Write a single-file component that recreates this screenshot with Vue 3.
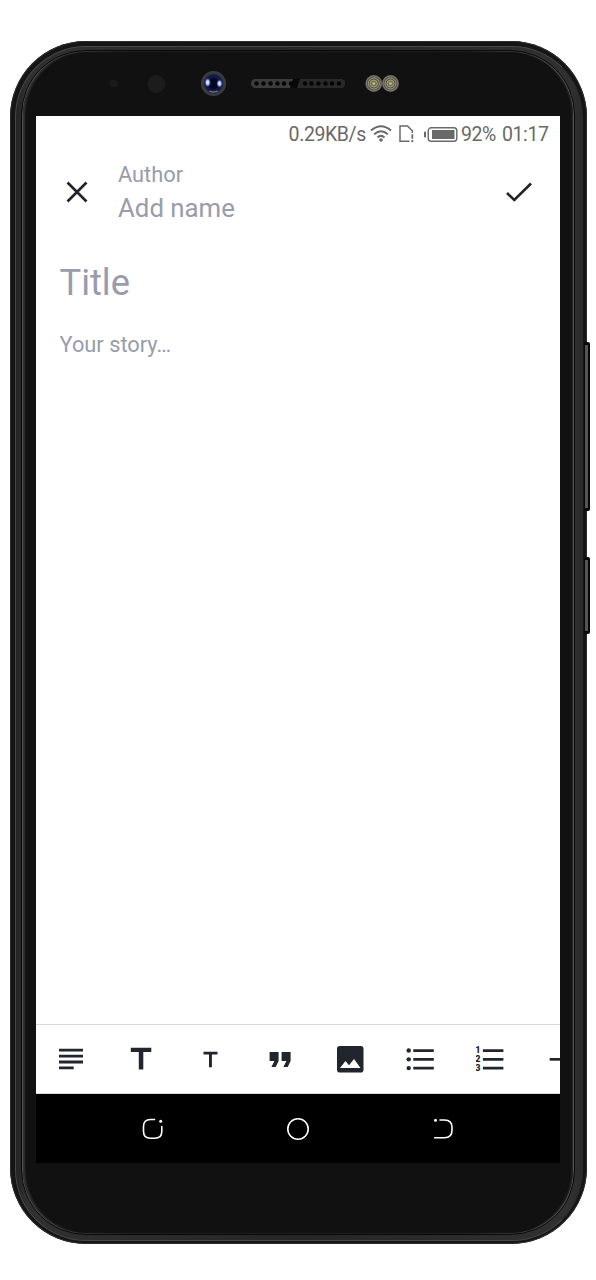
<template>
  <div class="stage">
    <div class="device">
      <div class="side-key volume"></div>
      <div class="side-key power"></div>

      <div class="rim">
        <div class="groove">
          <div class="panel">
            <div class="sensors">
              <svg width="524" height="62" viewBox="36 54 524 62">
                <defs>
                  <radialGradient id="lens">
                    <stop offset="0" stop-color="#03051c" />
                    <stop offset="0.45" stop-color="#0b1550" />
                    <stop offset="0.68" stop-color="#141a3c" />
                    <stop offset="0.78" stop-color="#33373d" />
                    <stop offset="1" stop-color="#3c4045" />
                  </radialGradient>
                  <radialGradient id="glint">
                    <stop offset="0" stop-color="#fff" />
                    <stop offset="0.45" stop-color="#a9bcff" />
                    <stop offset="1" stop-color="#1c2f9a" stop-opacity="0" />
                  </radialGradient>
                </defs>
                <circle cx="113.500" cy="83.500" r="4" fill="#191919" />
                <circle cx="156.500" cy="84" r="9" fill="#1c1c1c" />

                <!-- front camera -->
                <circle cx="213.500" cy="83.500" r="12.500" fill="url(#lens)" />
                <circle cx="213.500" cy="83.500" r="5.500" fill="#040722" />
                <ellipse cx="207.700" cy="82.500" rx="3.400" ry="5" fill="url(#glint)" />
                <ellipse cx="219.500" cy="83.500" rx="3.400" ry="4.500" fill="url(#glint)" />
                <path d="M209.500 91Q213.500 92.800 217.500 91" fill="none" stroke="#7d838d" stroke-width="1.200" />

                <!-- earpiece -->
                <rect x="251" y="79" width="94" height="9" rx="4.500" fill="#3c3c3c" />
                <path d="M293 79h47.500v9H290z" fill="#080808" />
                <path d="M300 79h40.500a4.500 4.500 0 0 1 0 9H297z" fill="#292929" />
                <circle v-for="x in speakerHoles" :key="x" :cx="x" cy="83.500" r="2.200" fill="#050505" />

                <!-- flash -->
                <g v-for="x in [373.8, 390.500]" :key="x" fill="none">
                  <circle :cx="x" cy="83.500" r="8.500" fill="#55544b" />
                  <circle :cx="x" cy="83.500" r="7.500" stroke="#8b877c" stroke-width="0.800" />
                  <circle :cx="x" cy="83.500" r="5.500" stroke="#a4a184" stroke-width="0.900" />
                  <circle :cx="x" cy="83.500" r="3.500" fill="#75734b" stroke="#aaa77a" stroke-width="0.900" />
                  <circle :cx="x" cy="83.500" r="1.300" fill="#c8c386" />
                </g>
              </svg>
            </div>

            <div class="screen">
              <div class="status-bar">
                <span class="speed">0.29KB/s</span>
                <svg class="wifi" width="22" height="18" viewBox="0 0 22 18" fill="none" stroke="#696969" stroke-width="2">
                  <path d="M1 5.500Q11-3 21 5.500M4.200 9.200Q11 3.200 17.800 9.200M7.500 12.500Q11 9.200 14.500 12.500" />
                  <circle cx="11" cy="15" r="1.800" fill="#696969" stroke="none" />
                </svg>
                <svg class="sim" width="15" height="18" viewBox="0 0 15 18" fill="none" stroke="#696969" stroke-width="1.500">
                  <path d="M10.500 16.200H1V1h7.500l4.800 4.800V8" />
                  <path d="M13.300 9.300v4.400" stroke-width="1.800" />
                  <circle cx="13.300" cy="16.200" r="1.100" fill="#696969" stroke="none" />
                </svg>
                <svg class="battery" width="34" height="15" viewBox="0 0 34 15">
                  <rect x="0" y="4.500" width="2" height="6" rx="0.800" fill="#696969" />
                  <rect x="4.200" y="0.800" width="28.600" height="13.400" rx="3" fill="none" stroke="#696969" stroke-width="1.400" />
                  <rect x="8" y="3" width="22.500" height="9" fill="#696969" />
                </svg>
                <span class="percent">92%</span>
                <span class="clock">01:17</span>
              </div>

              <header class="app-bar">
                <svg width="22" height="22" viewBox="0 0 22 22" fill="none" stroke="#20252b" stroke-width="2.600">
                  <path d="M1.500 1.500l19 19M20.500 1.500l-19 19" />
                </svg>
                <div class="author">
                  <span class="author-label">Author</span>
                  <span class="author-name">Add name</span>
                </div>
                <svg class="done" width="26" height="20" viewBox="0 0 26 20" fill="none" stroke="#20252b" stroke-width="2.600">
                  <path d="M1 11l7.300 7L25 1.500" />
                </svg>
              </header>

              <main class="editor">
                <div class="title">Title</div>
                <div class="story">Your story…</div>
              </main>

              <footer class="toolbar">
                <div v-for="tool in tools" :key="tool" class="tool">
                  <svg width="28" height="28" viewBox="0 0 28 28" fill="#20252e">
                    <path v-if="tool === 'paragraph'" d="M2 3.700h24v2.800H2zM2 9.700h24v2.800H2zM2 15.600h24v2.800H2zM2 21.500h14.700v2.800H2z" />
                    <path v-else-if="tool === 'heading'" d="M3.800 2.700h20.500v4.200h-8v17.600h-4.500V6.900h-8z" />
                    <path v-else-if="tool === 'subheading'" d="M7.500 6.700h14v2.900h-5.600v12.700H13V9.600H7.500z" />
                    <path v-else-if="tool === 'quote'" d="M3.600 7h9v9L9.700 22H5.400l3-6H3.600zM15.600 7h9v9l-2.900 6h-4.300l3-6h-4.800z" />
                    <template v-else-if="tool === 'image'">
                      <rect x="1" y="1" width="26.500" height="26.500" rx="2.800" />
                      <path d="M4 23l5.500-7 3.500 4.300L18 14l6.500 9z" fill="#fff" />
                    </template>
                    <template v-else-if="tool === 'bullets'">
                      <path d="M7.300 4.200h20.500v2.700H7.300zM7.300 13h20.500v2.700H7.300zM7.300 21.800h20.500v2.700H7.300z" />
                      <circle v-for="y in [5.500, 14.350, 23.100]" :key="y" cx="2.700" :cy="y" r="2.200" />
                    </template>
                    <template v-else-if="tool === 'numbers'">
                      <path d="M6.900 4.200h20.500v2.700H6.900zM6.900 13h20.500v2.700H6.900zM6.900 21.800h20.500v2.700H6.900z" />
                      <text x="-0.700" y="8.100" class="digit">1</text>
                      <text x="-0.700" y="17.300" class="digit">2</text>
                      <text x="-0.700" y="26.200" class="digit">3</text>
                    </template>
                    <path v-else d="M4.700 13h20v2.700h-20z" />
                  </svg>
                </div>
              </footer>

              <nav class="nav-bar">
                <svg width="22" height="22" viewBox="0 0 22 22" fill="none" stroke="#fff" stroke-width="1.600" stroke-linecap="round">
                  <path d="M12.500 1.500H8.500Q1.500 1.500 1.500 8.500v4.800q0 7 7 7h4.300q7 0 7-7V8.500" />
                  <circle cx="18.700" cy="3.300" r="1.500" fill="#fff" stroke="none" />
                </svg>
                <svg width="24" height="24" viewBox="0 0 24 24" fill="none" stroke="#fff" stroke-width="1.600">
                  <circle cx="12" cy="12" r="10.200" />
                </svg>
                <svg width="22" height="22" viewBox="0 0 22 22" fill="none" stroke="#fff" stroke-width="1.600" stroke-linecap="round">
                  <path d="M7 2h4.500q7.500 0 7.500 7.500v2.800q0 7.500-7.500 7.500H1.700" />
                  <circle cx="2.500" cy="2.200" r="1.500" fill="#fff" stroke="none" />
                </svg>
              </nav>
            </div>
          </div>
        </div>
      </div>
    </div>
  </div>
</template>

<script setup>
const tools = ['paragraph', 'heading', 'subheading', 'quote', 'image', 'bullets', 'numbers', 'divider']

const speakerHoles = [256.5, 263.5, 270.5, 277.500, 284, 291, 305, 311.5, 318.5, 325.500, 332, 339]
</script>

<style>
body {
  margin: 0;
  background: #fff;
}
</style>

<style scoped>
.stage {
  box-sizing: border-box;
  width: 596px;
  height: 1280px;
  padding: 41px 9px 0 10px;
  background: #fff;
  font-family: Roboto, sans-serif;
  overflow: hidden;
}

.device {
  position: relative;
  box-sizing: border-box;
  height: 1203px;
  padding: 5px 4px 3px 5px;
  border-radius: 76px;
  background: #151515;
  box-shadow: inset 0 0 0 1px #2c2c2c;
}

.side-key {
  position: absolute;
  right: -3px;
  box-sizing: border-box;
  width: 6px;
  border: 1px solid #080808;
  border-width: 3px 2px 3px 1px;
  border-radius: 2px;
  background: #555;
}

.volume {
  top: 301px;
  height: 169px;
}

.power {
  top: 516px;
  height: 77px;
}

.rim {
  box-sizing: border-box;
  height: 100%;
  padding: 3px 7px 5px 5px;
  border: 1px solid #484848;
  border-right-color: #292929;
  border-radius: 71px;
  background: linear-gradient(90deg, #242424, #303030 2%, #262626 50%, #303030 98%, #2b2b2b);
}

.groove {
  box-sizing: border-box;
  height: 100%;
  padding: 1px;
  border: 1px solid #090909;
  border-radius: 65px;
  background: linear-gradient(90deg, #505050, #1c1c1c 20%, #1c1c1c 80%, #555);
}

.panel {
  box-sizing: border-box;
  height: 100%;
  padding: 2px 12px 0 13px;
  border-radius: 63px;
  background: #111;
  box-shadow: inset 3px 0 2px -1px #343434, inset -2px 0 2px -1px #2c2c2c;
}

.sensors {
  height: 62px;
}

.sensors svg {
  display: block;
}

.screen {
  display: flex;
  flex-direction: column;
  width: 524px;
  height: 1047px;
  background: #fff;
  overflow: hidden;
}

.status-bar {
  display: flex;
  align-items: center;
  justify-content: flex-end;
  height: 36px;
  padding-right: 11.5px;
  color: #696969;
  font-size: 19.5px;
  letter-spacing: -0.4px;
}

.wifi {
  margin-left: 4px;
}

.sim {
  margin-left: 7px;
}

.battery {
  margin: 0 3px 0 10px;
}

.clock {
  margin-left: 6px;
}

.app-bar {
  display: flex;
  align-items: center;
  height: 80px;
  padding: 0 28px 0 30px;
}

.author {
  display: flex;
  flex-direction: column;
  margin-left: 30px;
  color: #989cac;
}

.author-label {
  font-size: 21.8px;
  line-height: 32px;
}

.author-name {
  font-size: 25.8px;
  line-height: 34px;
}

.done {
  margin-left: auto;
}

.editor {
  flex: 1;
  padding: 27px 23.5px;
  color: #989cac;
}

.title {
  font-size: 36.3px;
  line-height: 48px;
}

.story {
  margin-top: 24px;
  font-size: 21.8px;
  line-height: 28px;
}

.toolbar {
  display: flex;
  box-sizing: border-box;
  height: 70px;
  border-top: 1px solid #d8d8d8;
  border-bottom: 1px solid #d8d8d8;
}

.tool {
  flex: 0 0 69.8px;
  display: flex;
  align-items: center;
  justify-content: center;
}

.digit {
  font-family: Roboto, sans-serif;
  font-size: 9px;
  font-weight: 900;
}

.nav-bar {
  display: flex;
  align-items: center;
  justify-content: space-between;
  height: 69px;
  padding: 0 105.5px;
  background: #000;
}
</style>
